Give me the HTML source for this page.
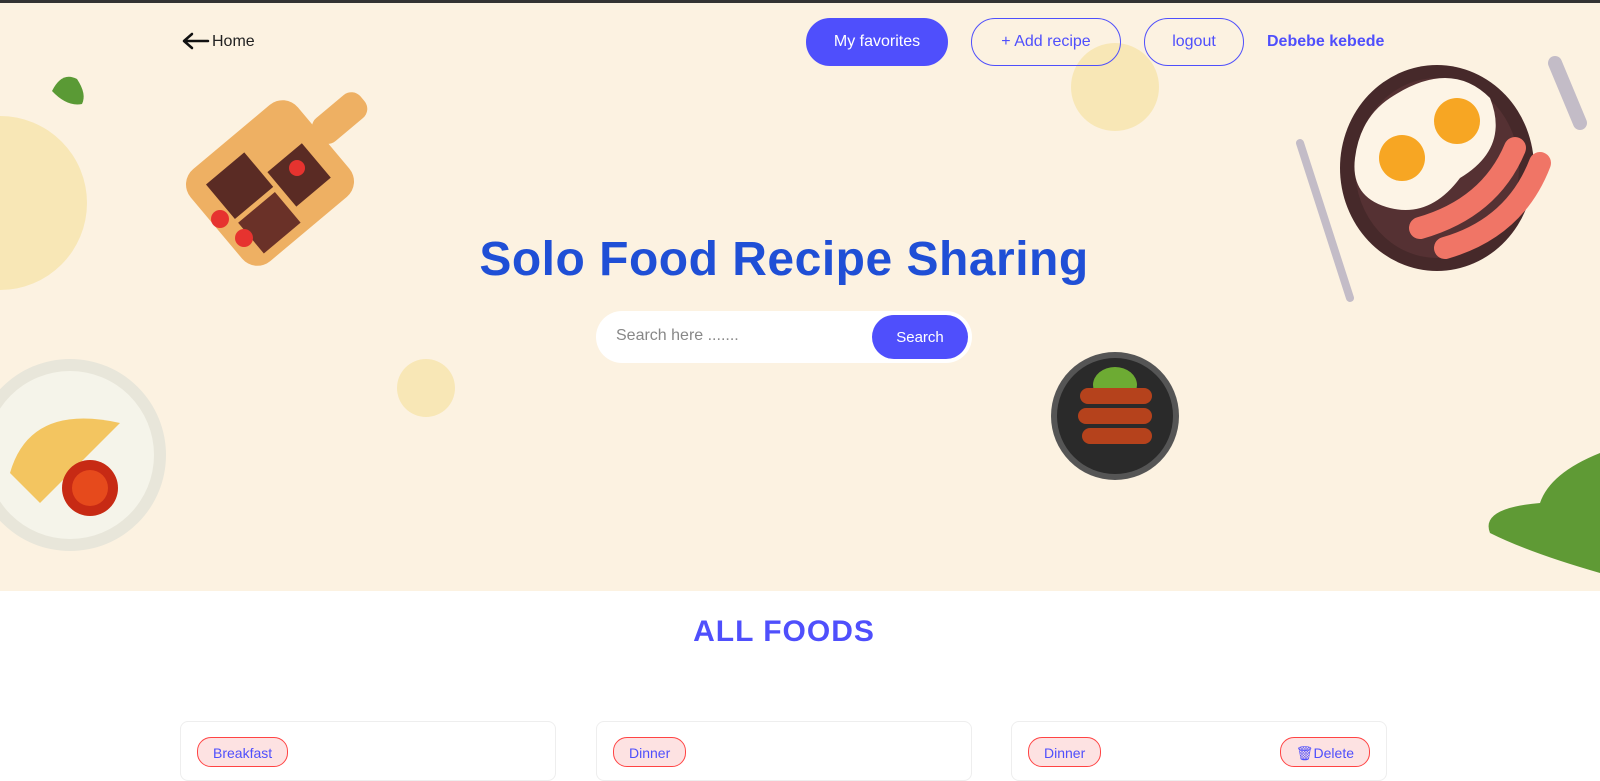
<!DOCTYPE html>
<html><head><meta charset="utf-8"><style>
*{margin:0;padding:0;box-sizing:border-box}
body{width:1600px;height:767px;overflow:hidden;background:#fff;font-family:"Liberation Sans",sans-serif;position:relative}
.top{position:absolute;left:0;top:0;width:1600px;height:3px;background:#333}
.hero{position:absolute;left:0;top:3px;width:1600px;height:588px;background:#fcf2e1;overflow:hidden}
.btn{position:absolute;height:48px;border-radius:24px;border:1px solid #4f4ffc;color:#4f4ffc;font-size:16px;display:flex;align-items:center;justify-content:center}
h1{position:absolute;left:0;width:1568px;text-align:center;top:229px;font-size:48px;font-weight:bold;color:#1f4fd6;letter-spacing:0.5px}
.search{position:absolute;left:596px;top:308px;width:376px;height:52px;background:#fff;border-radius:26px}
.search span{position:absolute;left:20px;top:16px;font-size:16px;color:#888}
.search div{position:absolute;right:4px;top:4px;width:96px;height:44px;border-radius:22px;background:#4f4ffc;color:#fff;font-size:15px;display:flex;align-items:center;justify-content:center}
h2{position:absolute;left:0;width:1568px;text-align:center;top:615px;font-size:30px;font-weight:900;color:#4f4ffc;letter-spacing:1px}
.card{position:absolute;top:721px;width:376px;height:60px;border:1px solid #eee;border-radius:8px;background:#fff}
.tag{position:absolute;top:15px;height:30px;border:1px solid #f44;background:#fde2e2;color:#4f4ffc;border-radius:14px;font-size:14px;padding:7px 15px}
</style></head><body>
<div class="top"></div>
<div class="hero">
<svg width="1600" height="588" style="position:absolute;left:0;top:0">
<circle cx="0" cy="200" r="87" fill="#f8e7b6"/>
<circle cx="1115" cy="84" r="44" fill="#f8e7b6"/>
<circle cx="426" cy="385" r="29" fill="#f8e7b6"/>
<path d="M52 88 q10-20 25-12 q10 15 5 25 q-15 3-30-13z" fill="#5a9a35"/>
<path d="M184 38 l24 0 M184 38 l8-7 M184 38 l8 7" stroke="#111" stroke-width="2.5" fill="none" stroke-linecap="round"/>
<g transform="rotate(-40 270 180)">
<rect x="200" y="120" width="140" height="120" rx="20" fill="#eeb063"/>
<rect x="335" y="160" width="60" height="30" rx="12" fill="#eeb063"/>
<rect x="220" y="140" width="50" height="45" fill="#5a2b24"/>
<rect x="275" y="170" width="45" height="45" fill="#5a2b24"/>
<rect x="220" y="190" width="48" height="40" fill="#6a3128"/>
</g>
<circle cx="220" cy="216" r="9" fill="#e6332f"/><circle cx="244" cy="235" r="9" fill="#e6332f"/><circle cx="297" cy="165" r="8" fill="#e6332f"/>
<circle cx="70" cy="452" r="96" fill="#e8e6da"/><circle cx="70" cy="452" r="84" fill="#f5f4ea"/>
<path d="M10 470 q20-70 110-50 q-40 40-80 80 z" fill="#f3c560"/>
<circle cx="90" cy="485" r="28" fill="#c72a14"/><circle cx="90" cy="485" r="18" fill="#e64a1c"/>
<circle cx="1115" cy="413" r="64" fill="#555"/><circle cx="1115" cy="413" r="58" fill="#2a2a2a"/>
<ellipse cx="1115" cy="382" rx="22" ry="18" fill="#6dab33"/>
<rect x="1080" y="385" width="72" height="16" rx="8" fill="#b5421c"/>
<rect x="1078" y="405" width="74" height="16" rx="8" fill="#b5421c"/>
<rect x="1082" y="425" width="70" height="16" rx="8" fill="#b5421c"/>
<ellipse cx="1437" cy="165" rx="97" ry="103" fill="#46292a"/>
<ellipse cx="1437" cy="165" rx="82" ry="90" fill="#553133"/>
<path d="M1390 95 q60-40 100 0 q20 50-30 80 q-30 40-70 30 q-40-10-35-50 q5-40 35-60z" fill="#fdf4e6"/>
<circle cx="1457" cy="118" r="23" fill="#f7a623"/><circle cx="1402" cy="155" r="23" fill="#f7a623"/>
<path d="M1420 225 q70-20 95-80" stroke="#f07566" stroke-width="22" stroke-linecap="round" fill="none"/>
<path d="M1445 245 q70-20 95-85" stroke="#f07566" stroke-width="22" stroke-linecap="round" fill="none"/>
<path d="M1300 140 l50 155" stroke="#c3bcc7" stroke-width="8" stroke-linecap="round"/>
<path d="M1555 60 l25 60" stroke="#c3bcc7" stroke-width="14" stroke-linecap="round"/>
<path d="M1600 450 q-50 20-60 50 q-60 5-50 30 q40 20 110 40z" fill="#5f9a35"/>
</svg>
<div style="position:absolute;left:212px;top:30px;font-size:16px;color:#222">Home</div>
<div class="btn" style="left:806px;top:15px;width:142px;background:#4f4ffc;color:#fff">My favorites</div>
<div class="btn" style="left:971px;top:15px;width:150px">+ Add recipe</div>
<div class="btn" style="left:1144px;top:15px;width:100px">logout</div>
<div style="position:absolute;left:1267px;top:30px;font-size:16px;font-weight:bold;color:#4f4ffc">Debebe kebede</div>
<h1>Solo Food Recipe Sharing</h1>
<div class="search"><span>Search here .......</span><div>Search</div></div>
</div>
<h2>ALL FOODS</h2>
<div class="card" style="left:180px"><div class="tag" style="left:16px">Breakfast</div></div>
<div class="card" style="left:596px"><div class="tag" style="left:16px">Dinner</div></div>
<div class="card" style="left:1011px"><div class="tag" style="left:16px">Dinner</div><div class="tag" style="right:16px">🗑Delete</div></div>
</body></html>
